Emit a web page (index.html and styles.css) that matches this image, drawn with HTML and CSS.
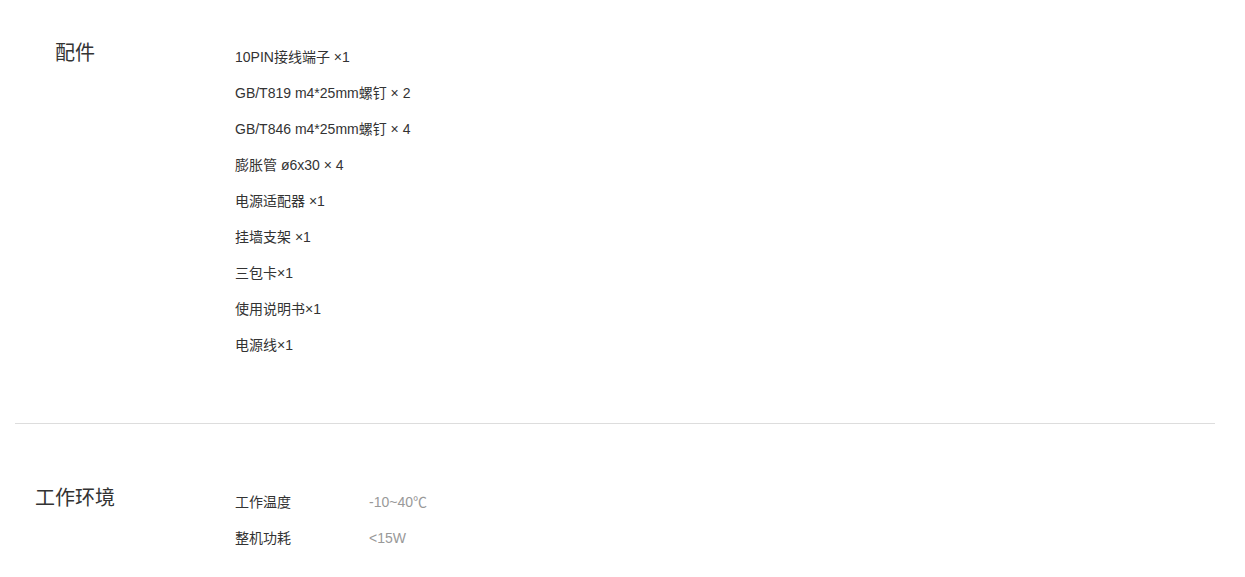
FILE: index.html
```html
<!DOCTYPE html>
<html lang="zh-CN">
<head>
  <meta charset="UTF-8" />
  <meta name="viewport" content="width=device-width, initial-scale=1.0"/>
  <title>产品参数</title>
  <link rel="stylesheet" href="styles.css">
</head>
<body>
  <div class="container">
    <div class="section">
      <h2 class="section-title">配件</h2>
      <ul class="spec-list">
        <li>10PIN接线端子 ×1</li>
        <li>GB/T819 m4*25mm螺钉 × 2</li>
        <li>GB/T846 m4*25mm螺钉 × 4</li>
        <li>膨胀管 ø6x30 × 4</li>
        <li>电源适配器 ×1</li>
        <li>挂墙支架 ×1</li>
        <li>三包卡×1</li>
        <li>使用说明书×1</li>
        <li>电源线×1</li>
      </ul>
    </div>

    <div class="section">
      <h2 class="section-title">工作环境</h2>
      <ul class="spec-list">
        <li><span class="spec-name">工作温度</span><span class="spec-value">-10~40℃</span></li>
        <li><span class="spec-name">整机功耗</span><span class="spec-value">&lt;15W</span></li>
      </ul>
    </div>
  </div>
</body>
</html>
```
FILE: styles.css
```css
body {
  margin: 0;
  font-family: "Liberation Sans", Arial, "Noto Sans CJK SC", sans-serif;
  background: #fff;
  color: #333;
}

.container {
  width: 1200px;
  margin-left: 15px;
}

.section {
  display: flex;
  padding: 39px 0 60px;
  border-bottom: 1px solid #ddd;
}

.section + .section {
  padding-top: 60px;
}

.section:last-child {
  padding-bottom: 0;
  border-bottom: none;
}

.section-title {
  width: 120px;
  margin: 0 100px 0 0;
  font-size: 20px;
  font-weight: normal;
  line-height: 28px;
  text-align: center;
  color: #333;
}

.spec-list {
  list-style: none;
  margin: 0;
  padding: 0;
  font-size: 14px;
  line-height: 36px;
}

.spec-name {
  display: inline-block;
  width: 134px;
}

.spec-value {
  color: #999;
}
```
